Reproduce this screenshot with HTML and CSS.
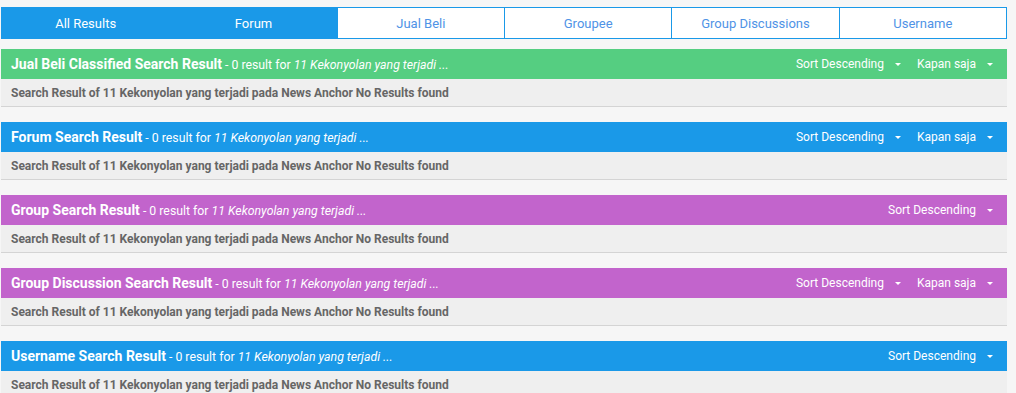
FILE: index.html
```html
<!DOCTYPE html>
<html>
<head>
<meta charset="utf-8">
<link rel="stylesheet" href="styles.css">
</head>
<body>
<div class="page">
  <nav class="tabs">
    <a class="tab active">All Results</a>
    <a class="tab active">Forum</a>
    <a class="tab">Jual Beli</a>
    <a class="tab">Groupee</a>
    <a class="tab">Group Discussions</a>
    <a class="tab">Username</a>
  </nav>

  <section class="result">
    <header class="result-head green">
      <div class="title"><b>Jual Beli Classified Search Result</b> - 0 result for <i>11 Kekonyolan yang terjadi ...</i></div>
      <div class="controls">
        <span class="dd">Sort Descending<span class="caret"></span></span>
        <span class="dd">Kapan saja<span class="caret"></span></span>
      </div>
    </header>
    <div class="result-body">Search Result of 11 Kekonyolan yang terjadi pada News Anchor No Results found</div>
  </section>

  <section class="result">
    <header class="result-head blue">
      <div class="title"><b>Forum Search Result</b> - 0 result for <i>11 Kekonyolan yang terjadi ...</i></div>
      <div class="controls">
        <span class="dd">Sort Descending<span class="caret"></span></span>
        <span class="dd">Kapan saja<span class="caret"></span></span>
      </div>
    </header>
    <div class="result-body">Search Result of 11 Kekonyolan yang terjadi pada News Anchor No Results found</div>
  </section>

  <section class="result">
    <header class="result-head purple">
      <div class="title"><b>Group Search Result</b> - 0 result for <i>11 Kekonyolan yang terjadi ...</i></div>
      <div class="controls">
        <span class="dd">Sort Descending<span class="caret"></span></span>
      </div>
    </header>
    <div class="result-body">Search Result of 11 Kekonyolan yang terjadi pada News Anchor No Results found</div>
  </section>

  <section class="result">
    <header class="result-head purple">
      <div class="title"><b>Group Discussion Search Result</b> - 0 result for <i>11 Kekonyolan yang terjadi ...</i></div>
      <div class="controls">
        <span class="dd">Sort Descending<span class="caret"></span></span>
        <span class="dd">Kapan saja<span class="caret"></span></span>
      </div>
    </header>
    <div class="result-body">Search Result of 11 Kekonyolan yang terjadi pada News Anchor No Results found</div>
  </section>

  <section class="result">
    <header class="result-head blue">
      <div class="title"><b>Username Search Result</b> - 0 result for <i>11 Kekonyolan yang terjadi ...</i></div>
      <div class="controls">
        <span class="dd">Sort Descending<span class="caret"></span></span>
      </div>
    </header>
    <div class="result-body">Search Result of 11 Kekonyolan yang terjadi pada News Anchor No Results found</div>
  </section>
</div>
</body>
</html>
```

FILE: styles.css
```css
* { box-sizing: border-box; }
html, body {
  margin: 0;
  padding: 0;
  background: #f6f6f6;
  font-family: Roboto, "Liberation Sans", Arial, sans-serif;
}
.page {
  padding: 7px 9px 0 1px;
  display: flex;
  flex-direction: column;
}
.tabs {
  display: grid;
  grid-template-columns: repeat(6, 1fr);
  height: 32px;
  border: 1px solid #1a99e8;
  background: #fff;
  margin-bottom: 10px;
}
.tab {
  display: flex;
  align-items: center;
  justify-content: center;
  font-size: 13px;
  color: #4f93e6;
  border-left: 1px solid #1a99e8;
}
.tab:first-child { border-left: none; }
.tab.active {
  background: #1a99e8;
  color: #fff;
  border-left-color: #1a99e8;
}
.result {
  margin-bottom: 15px;
}
.result-head {
  height: 30px;
  display: flex;
  align-items: center;
  justify-content: space-between;
  padding: 0 10px;
  color: #fff;
  font-size: 12px;
}
.title {
  font-size: 12.3px;
}
.result-head b {
  font-size: 14px;
  font-weight: 700;
}
.green { background: #55ce81; }
.blue { background: #1a99e8; }
.purple { background: #c264cc; }
.controls {
  display: flex;
  gap: 16px;
  align-items: center;
  padding-right: 4px;
}
.dd {
  display: flex;
  align-items: center;
  font-size: 12px;
}
.caret {
  display: inline-block;
  width: 0;
  height: 0;
  margin-left: 11px;
  border-left: 3px solid transparent;
  border-right: 3px solid transparent;
  border-top: 3px solid #fff;
}
.result-body {
  height: 28px;
  background: #efefef;
  border-bottom: 1px solid #d4d4d4;
  display: flex;
  align-items: center;
  padding: 0 10px;
  font-size: 12px;
  font-weight: 700;
  color: #666;
}
```
